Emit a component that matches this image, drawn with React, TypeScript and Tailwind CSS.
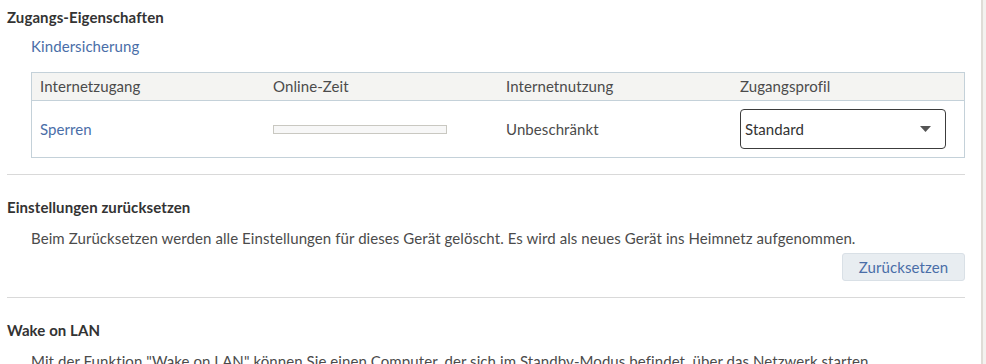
import React from "react";

const font = { fontFamily: '"Source Sans Pro", Lato, "Noto Sans", sans-serif' };

export default function App() {
  return (
    <div className="w-[986px] h-[364px] overflow-hidden bg-white flex text-[15px] tracking-[0.08px] text-[#4b4b4b]" style={font}>
      <div className="w-[965px] pl-[7px] shrink-0">
        <h2 className="pt-[7px] h-[27px] leading-[20px] font-bold text-[#333]">Zugangs-Eigenschaften</h2>
        <div className="pl-[24px] mt-[9px] leading-[20px] text-[#4a6ea8]">Kindersicherung</div>
        <div className="ml-[24px] mt-[16px] border border-[#c4d1d9]">
          <div className="grid grid-cols-4 h-[28px] bg-[#f4f4f2] border-b border-[#c4d1d9] items-center">
            <div className="pl-[8px]">Internetzugang</div>
            <div className="pl-[8px]">Online-Zeit</div>
            <div className="pl-[8px]">Internetnutzung</div>
            <div className="pl-[9px]">Zugangsprofil</div>
          </div>
          <div className="grid grid-cols-4 h-[56px] items-center">
            <div className="pl-[8px] text-[#4a6ea8]">Sperren</div>
            <div className="pl-[8px]">
              <div className="w-[174px] h-[9px] border border-[#c9c8c1] bg-[#f7f7f7]" />
            </div>
            <div className="pl-[8px]">Unbeschränkt</div>
            <div className="pl-[9px]">
              <div className="w-[206px] h-[40px] border border-[#3c3c3c] rounded-[4px] flex items-center pl-[4px] pr-[14px] justify-between text-[#333]">
                <span>Standard</span>
                <svg width="11" height="6" viewBox="0 0 11 6"><path d="M0 0h11L5.5 6z" fill="#555" /></svg>
              </div>
            </div>
          </div>
        </div>
        <div className="mt-[16px] h-px bg-[#d9d9d9]" />
        <h2 className="mt-[22px] leading-[20px] font-bold text-[#333]">Einstellungen zurücksetzen</h2>
        <p className="mt-[11px] pl-[24px] leading-[20px]">Beim Zurücksetzen werden alle Einstellungen für dieses Gerät gelöscht. Es wird als neues Gerät ins Heimnetz aufgenommen.</p>
        <div className="mt-[5px] flex justify-end">
          <button className="w-[123px] h-[28px] rounded-[3px] bg-[#e8edf1] border border-[#d9e0e6] text-[#4a6ea8] leading-[20px]">Zurücksetzen</button>
        </div>
        <div className="mt-[16px] h-px bg-[#d9d9d9]" />
        <h2 className="mt-[22px] leading-[20px] font-bold text-[#333]">Wake on LAN</h2>
        <p className="mt-[11px] pl-[24px] leading-[20px] whitespace-nowrap">Mit der Funktion "Wake on LAN" können Sie einen Computer, der sich im Standby-Modus befindet, über das Netzwerk starten.</p>
      </div>
      <div className="flex-1" />
      <div className="w-[2px] bg-[#dfdcd6]" />
      <div className="w-[3px] bg-[#f3f2ef]" />
    </div>
  );
}
